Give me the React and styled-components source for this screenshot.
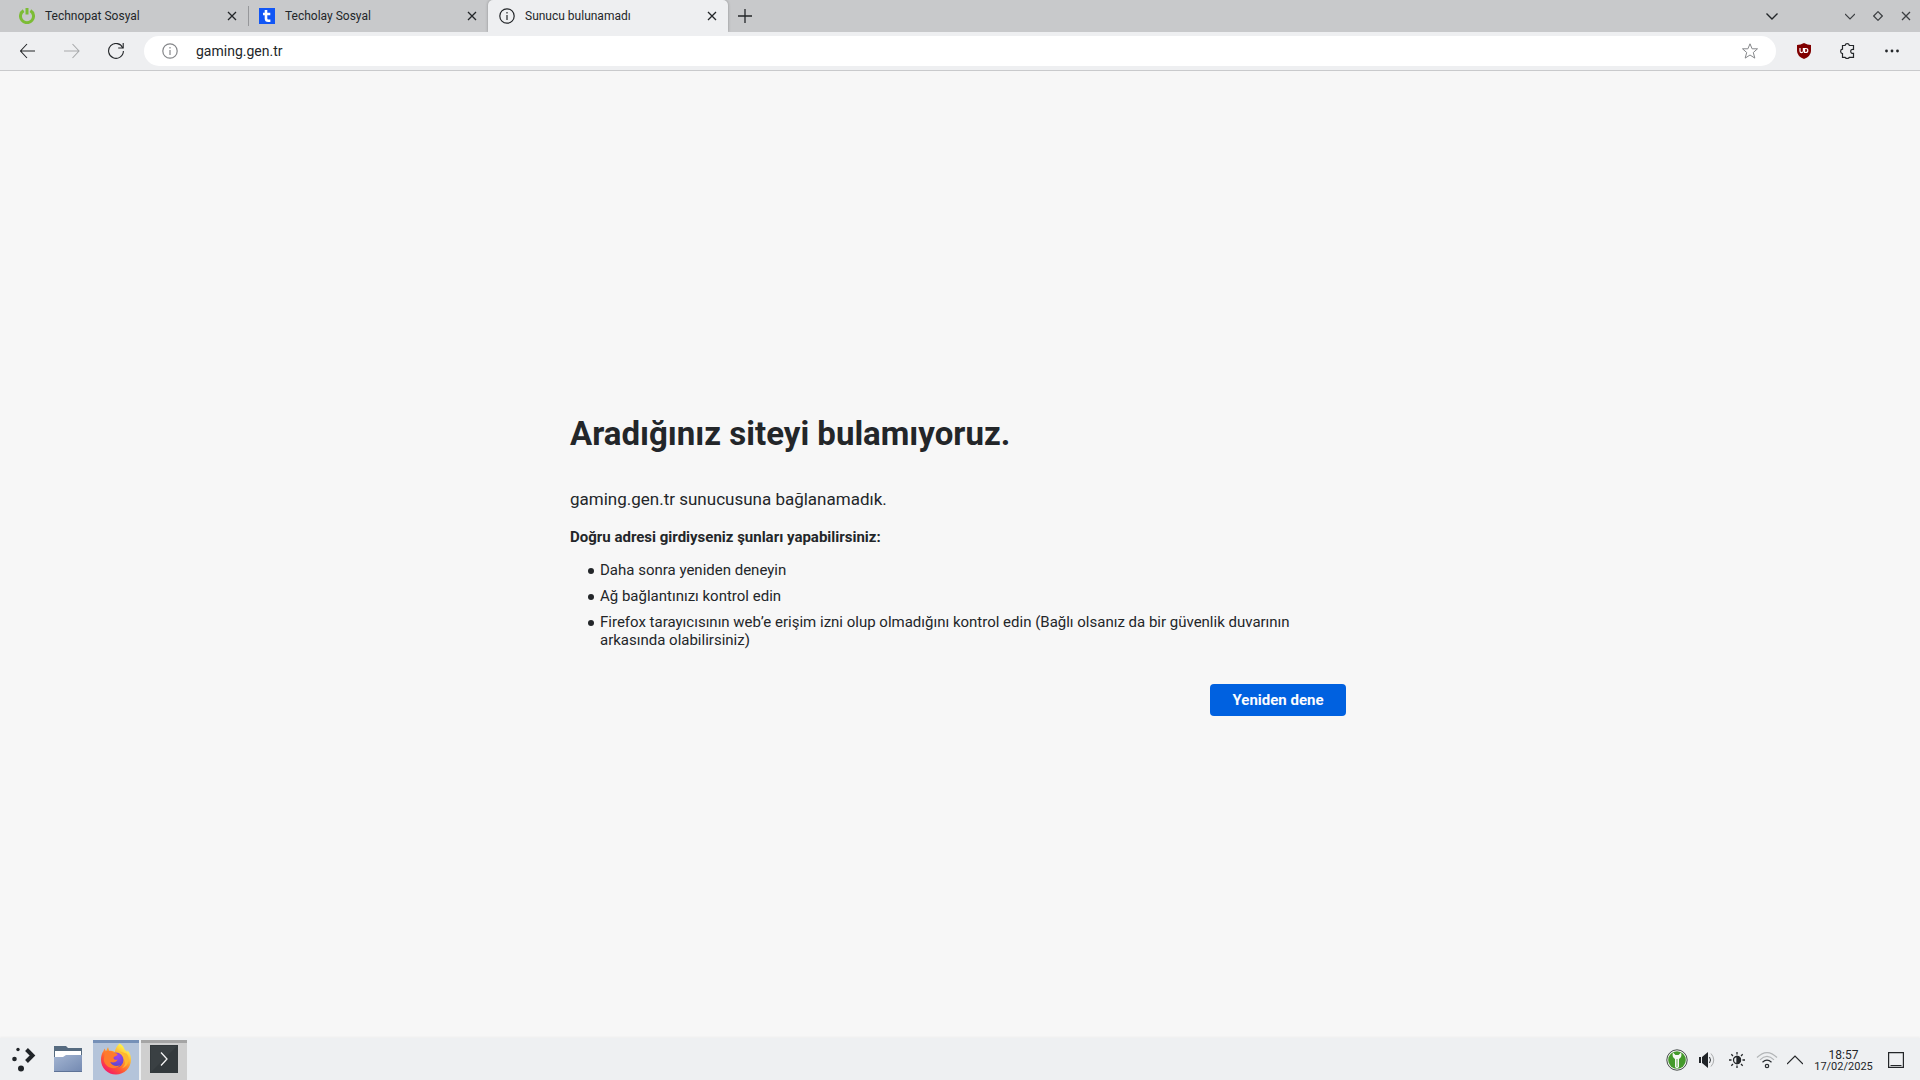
import React, { useState } from 'react';
import styled, { createGlobalStyle } from 'styled-components';

const tabs = [
  { title: 'Technopat Sosyal', icon: 'power' },
  { title: 'Techolay Sosyal', icon: 'techolay', separator: true },
  { title: 'Sunucu bulunamadı', icon: 'info', active: true },
];

const suggestions = [
  'Daha sonra yeniden deneyin',
  'Ağ bağlantınızı kontrol edin',
  'Firefox tarayıcısının web’e erişim izni olup olmadığını kontrol edin (Bağlı olsanız da bir güvenlik duvarının arkasında olabilirsiniz)',
];

const Line = ({ size = 16, width = 1, children, ...rest }) => (
  <svg
    width={size}
    height={size}
    viewBox={`0 0 ${size} ${size}`}
    fill="none"
    stroke="currentColor"
    strokeWidth={width}
    aria-hidden="true"
    {...rest}
  >
    {children}
  </svg>
);

const InfoIcon = () => (
  <Line width={1.2}>
    <circle cx="8" cy="8" r="7.2" />
    <path d="M8 7v5" />
    <path d="M8 4v1.5" />
  </Line>
);

const PowerIcon = () => (
  <Line width={3} stroke="#7cbc35">
    <path d="M4.6 2.6A6.5 6.5 0 1 0 11.4 2.6" />
    <path d="M8 0v6.5" />
  </Line>
);

const TecholayIcon = () => (
  <svg width="16" height="16" viewBox="0 0 16 16" aria-hidden="true">
    <path fill="#1156f5" d="M0 0h16v16H0z" />
    <path fill="none" stroke="#fff" strokeWidth="2.6" d="M7 2v8.5q0 2.2 2.2 2.2h2.2M4 6h7.3" />
  </svg>
);

const CloseIcon = () => (
  <Line size={10} width={1.3}>
    <path d="M1 1l8 8M9 1L1 9" />
  </Line>
);

const ChevronDown = () => (
  <Line size={12} width={1.4}>
    <path d="M0.5 3.5L6 9l5.5-5.5" />
  </Line>
);

const BackIcon = () => (
  <Line width={1.1}>
    <path d="M15 8H0M7 1L0.5 8 7 15" />
  </Line>
);

const ForwardIcon = () => (
  <Line width={1.1}>
    <path d="M0 8h15M8.500 1L15 8l-6.500 7" />
  </Line>
);

const ReloadIcon = () => (
  <Line width={1.1}>
    <path d="M14.8 5A7.400 7.400 0 1 0 15.400 8" />
    <path d="M15.200 0v5h-5" />
  </Line>
);

const StarIcon = () => (
  <Line>
    <path d="M8 .8l2.100 5h5.400l-4.200 3.700 1.500 5.600L8 12l-4.800 3.100 1.500-5.600L.5 5.800h5.400z" />
  </Line>
);

const ShieldIcon = () => (
  <svg width="16" height="16" viewBox="0 0 16 16" aria-hidden="true">
    <path fill="#800000" d="M8 0q3.500 2 7 2v6q0 5-7 8-7-3-7-8V2q3.500 0 7-2z" />
    <path fill="none" stroke="#fff" strokeWidth="1.2" d="M4 5v3q0 1.600 1.600 1.600T7.400 8V5M8.600 5.500v4h1.200q2 0 2-2t-2-2z" />
  </svg>
);

const PuzzleIcon = () => (
  <Line width={1.2}>
    <path d="M2.500 2.500H5Q5.500.7 7.200.7t2.200 1.800h4.100v4q-2.800-.4-2.800 1.800t2.800 2v4H9.400q-.5 1.200-2.200 1.200T5 14.300H2.500v-3.700Q.6 10.300.6 8.300t1.900-2.100z" />
  </Line>
);

const MoreIcon = () => (
  <svg width="16" height="16" viewBox="0 0 16 16" fill="currentColor" aria-hidden="true">
    <circle cx="2.5" cy="8" r="1.4" />
    <circle cx="8" cy="8" r="1.4" />
    <circle cx="13.5" cy="8" r="1.4" />
  </svg>
);

const LauncherIcon = () => (
  <svg width="28" height="26" viewBox="-3 0 28 26" fill="#202428" aria-hidden="true">
    <circle cx="7" cy="3.500" r="1.700" />
    <circle cx="3.500" cy="13" r="2.300" />
    <circle cx="10" cy="22.500" r="3" />
    <path fill="none" stroke="#202428" strokeWidth="4" d="M15.500 3.500l6 6-6 6" />
  </svg>
);

const FolderIcon = () => (
  <svg width="30" height="28" viewBox="0 0 30 28" aria-hidden="true">
    <defs>
      <linearGradient id="folder" x1="0" y1="0" x2="1" y2="1">
        <stop offset="0" stopColor="#a3b5d2" />
        <stop offset="1" stopColor="#7389b1" />
      </linearGradient>
    </defs>
    <path fill="#566b80" d="M1 1h12l2 2h14v14H1z" />
    <path fill="#fff" d="M2 6h26v10H2z" />
    <path fill="url(#folder)" d="M1 12h9l3-2h16v17H1z" />
    <path fill="#5e7397" d="M1 26h28v1H1z" />
  </svg>
);

const FirefoxIcon = () => (
  <svg width="32" height="32" viewBox="0 0 32 32" aria-hidden="true">
    <defs>
      <linearGradient id="fire" x1="0.85" y1="0.05" x2="0.2" y2="0.95">
        <stop offset="0.1" stopColor="#fff04a" />
        <stop offset="0.4" stopColor="#ffa22d" />
        <stop offset="0.7" stopColor="#ff5634" />
        <stop offset="1" stopColor="#f5156c" />
      </linearGradient>
      <radialGradient id="globe" cx="0.6" cy="0.25" r="0.8">
        <stop offset="0" stopColor="#a044ef" />
        <stop offset="1" stopColor="#5048c8" />
      </radialGradient>
    </defs>
    <path
      fill="url(#fire)"
      d="M19.5.5c3 1.5 4.5 4 5.2 6.2 1.3.8 2.2 1.8 2.6 2.6l.2-2c2.3 2.5 3.5 6 3.5 9.200C31 25 24.300 31.500 16 31.500S1 25 1 16.700c0-3.300.8-6.400 2.500-8.600L4.500 5.500 6 8.200 8 4l1.300 4c2-.4 4 0 5.500 1C15.500 5.500 17 2.500 19.500.5z"
    />
    <circle cx="16" cy="17" r="7.5" fill="url(#globe)" />
    <path fill="#ff7b2c" d="M5 9c3-2 7-1.300 9 .8 1.500.2 3 .8 3.700 1.700-.7 1.800-3.700 1.700-4.200 3.300 0 1.800 2 2.600 4.200 1.700-1 2.500-4.200 3.700-7.500 2.500 2 4 6.500 5 10 3-5 6-15 3-16.500-5z" />
    <path fill="#ffb72f" d="M17.500 8.500c4.500.5 7 4 6.500 8 2.500 3 .5 7-2.500 9 8-2.500 9-11 5-15-3-1-6-2.500-9-2z" />
  </svg>
);

const TerminalIcon = () => (
  <svg width="28" height="28" viewBox="0 0 28 28" aria-hidden="true">
    <path fill="#33393c" d="M0 0h28v28H0z" />
    <path fill="#454b4e" d="M1 1h26L1 27z" opacity="0.4" />
    <path fill="none" stroke="#f4f4f4" strokeWidth="1.3" d="M11 7.500l6 6.500-6 6.500" />
  </svg>
);

const KeyIcon = () => (
  <svg width="22" height="22" viewBox="0 0 22 22" aria-hidden="true">
    <circle cx="11" cy="11" r="10.2" fill="#f3f5f2" stroke="#444b48" />
    <circle cx="11" cy="11" r="8.8" fill="#449a2b" />
    <path fill="#f6f8f4" d="M7 3.500L9.500 6h3L15 3.500q1.500 4-2 6.500V18l-2 1.500L9 18v-8Q5.500 7.500 7 3.500z" />
    <path stroke="#60a74e" d="M11 10v8" />
  </svg>
);

const VolumeIcon = () => (
  <svg width="18" height="18" viewBox="0 0 18 18" aria-hidden="true">
    <path fill="#202428" d="M1 6h2v6H1zM4 6l6-5v16l-6-5z" />
    <path fill="none" stroke="#34383b" d="M11.500 6q2 3 0 6" />
    <path fill="none" stroke="#aaacad" d="M13 2.500q5.500 6.500 0 13" />
  </svg>
);

const BrightnessIcon = () => (
  <Line width={1.3}>
    <circle cx="8" cy="8" r="3.5" />
    <path fill="currentColor" d="M8 4.500a3.500 3.500 0 0 1 0 7z" />
    <path d="M8 0v2.500M8 13.500V16M0 8h2.500M13.500 8H16M2.300 2.300L4 4M12 12l1.700 1.700M2.300 13.700L4 12M12 4l1.700-1.700" />
  </Line>
);

const WifiIcon = () => (
  <svg width="22" height="18" viewBox="0 0 22 18" fill="none" strokeWidth="1.2" aria-hidden="true">
    <path stroke="#b3b6b8" d="M1 6.500q10-10 20 0M4 8.800q7-7 14 0" />
    <path stroke="#2a2e32" d="M6.500 11.200q4.500-4 9 0" />
    <circle cx="11" cy="15" r="1.7" stroke="#2a2e32" />
  </svg>
);

const favicons = {
  power: PowerIcon,
  techolay: TecholayIcon,
  info: InfoIcon,
};

const BrowserTab = ({ tab }) => {
  const Favicon = favicons[tab.icon];
  return (
    <Tab $active={tab.active} $separator={tab.separator}>
      <TabLabel role="tab" aria-selected={!!tab.active}>
        <Favicon />
        {tab.title}
      </TabLabel>
      <TabClose aria-label={`${tab.title} sekmesini kapat`}>
        <CloseIcon />
      </TabClose>
    </Tab>
  );
};

const App = () => {
  const [url, setUrl] = useState('gaming.gen.tr');

  return (
    <Desktop>
      <GlobalStyle />
      <TabBar>
        <TabList role="tablist">
          {tabs.map((tab) => (
            <BrowserTab key={tab.title} tab={tab} />
          ))}
        </TabList>
        <TitleButton $width={34} aria-label="Yeni sekme">
          <Line size={14} width={1.3}>
            <path d="M7 0v14M0 7h14" />
          </Line>
        </TitleButton>
        <Spacer />
        <TitleButton $width={28} aria-label="Tüm sekmeleri listele">
          <ChevronDown />
        </TitleButton>
        <WindowControls>
          <TitleButton $width={28} aria-label="Küçült">
            <Line size={10} width={1.2}>
              <path d="M0 3l5 5 5-5" />
            </Line>
          </TitleButton>
          <TitleButton $width={28} aria-label="Geri yükle">
            <Line size={10} width={1.2}>
              <path d="M5 .7L9.300 5 5 9.300.7 5z" />
            </Line>
          </TitleButton>
          <TitleButton $width={28} aria-label="Kapat">
            <CloseIcon />
          </TitleButton>
        </WindowControls>
      </TabBar>

      <Toolbar>
        <ToolButton aria-label="Geri">
          <BackIcon />
        </ToolButton>
        <ToolButton aria-label="İleri" disabled>
          <ForwardIcon />
        </ToolButton>
        <ToolButton aria-label="Yenile">
          <ReloadIcon />
        </ToolButton>
        <UrlBar>
          <UrlButton aria-label="Site bilgileri">
            <InfoIcon />
          </UrlButton>
          <UrlInput
            aria-label="Adres"
            value={url}
            onChange={(e) => setUrl(e.target.value)}
          />
          <UrlButton aria-label="Yer imlerine ekle">
            <StarIcon />
          </UrlButton>
        </UrlBar>
        <ToolButton aria-label="uBlock Origin">
          <ShieldIcon />
        </ToolButton>
        <ToolButton aria-label="Uzantılar">
          <PuzzleIcon />
        </ToolButton>
        <ToolButton aria-label="Menü">
          <MoreIcon />
        </ToolButton>
      </Toolbar>

      <Page>
        <ErrorBox>
          <Title>Aradığınız siteyi bulamıyoruz.</Title>
          <ShortDesc>gaming.gen.tr sunucusuna bağlanamadık.</ShortDesc>
          <Hint>Doğru adresi girdiyseniz şunları yapabilirsiniz:</Hint>
          <HintList>
            {suggestions.map((text) => (
              <HintItem key={text}>{text}</HintItem>
            ))}
          </HintList>
          <RetryButton>Yeniden dene</RetryButton>
        </ErrorBox>
      </Page>

      <Taskbar>
        <TaskButton aria-label="Uygulama başlatıcı" $width={43}>
          <LauncherIcon />
        </TaskButton>
        <TaskButton aria-label="Dosyalar">
          <FolderIcon />
        </TaskButton>
        <TaskButton aria-label="Firefox" $fill="#b4c4da" $edge="#7590b7">
          <FirefoxIcon />
        </TaskButton>
        <TaskButton aria-label="Konsole" $fill="#cfcfcf" $edge="#a5a5a5">
          <TerminalIcon />
        </TaskButton>
        <Spacer />
        <TrayButton aria-label="KeePassXC">
          <KeyIcon />
        </TrayButton>
        <TrayButton aria-label="Ses">
          <VolumeIcon />
        </TrayButton>
        <TrayButton aria-label="Parlaklık">
          <BrightnessIcon />
        </TrayButton>
        <TrayButton aria-label="Ağlar">
          <WifiIcon />
        </TrayButton>
        <TrayButton $width={26} aria-label="Gizli simgeleri göster">
          <Line width={1.2}>
            <path d="M0 12l8-8 8 8" />
          </Line>
        </TrayButton>
        <Clock>
          <Time>18:57</Time>
          <DateText>17/02/2025</DateText>
        </Clock>
        <TrayButton $width={34} aria-label="Masaüstünü göster">
          <Line width={1.2}>
            <path d="M.6.6h14.800v14.800H.6zM2.500 13.500h11" />
          </Line>
        </TrayButton>
      </Taskbar>
    </Desktop>
  );
};

const GlobalStyle = createGlobalStyle`
  * {
    box-sizing: border-box;
  }
  body {
    margin: 0;
    font-family: Roboto, "Noto Sans", sans-serif;
    color: #232629;
  }
  button, input {
    margin: 0;
    padding: 0;
    border: none;
    background: none;
    font: inherit;
    color: inherit;
  }
  svg {
    display: block;
    flex: none;
  }
`;

const Desktop = styled.div`
  display: flex;
  flex-direction: column;
  min-height: 100vh;
  background-color: #f7f7f7;
`;

const Spacer = styled.div`
  flex: 1;
`;

const TabBar = styled.header`
  display: flex;
  height: 32px;
  padding-left: 8px;
  background-color: #c8c9cb;
`;

const TabList = styled.div`
  display: flex;
`;

const Tab = styled.div`
  display: flex;
  align-items: center;
  width: 240px;
  padding: 0 10px 0 11px;
  border-radius: 5px 5px 0 0;
  background-color: ${({ $active }) => ($active ? '#eeeff1' : 'transparent')};
  background-image: ${({ $separator }) =>
    $separator ? 'linear-gradient(#96979a, #96979a)' : 'none'};
  background-size: 1px 20px;
  background-position: 0 6px;
  background-repeat: no-repeat;
  box-shadow: ${({ $active }) => ($active ? '0 0 3px rgba(0, 0, 0, 0.3)' : 'none')};
`;

const TabLabel = styled.button`
  display: flex;
  flex: 1;
  align-items: center;
  gap: 10px;
  font-size: 12px;
  line-height: 16px;
`;

const TabClose = styled.button`
  padding: 1px;
`;

const TitleButton = styled.button`
  display: flex;
  align-items: center;
  justify-content: center;
  width: ${({ $width }) => $width}px;
`;

const WindowControls = styled.div`
  display: flex;
  margin-left: 50px;
  color: #3c3f42;
`;

const Toolbar = styled.nav`
  position: relative;
  display: flex;
  align-items: center;
  height: 39px;
  padding: 0 6px;
  border-bottom: 1px solid #c9cacc;
  background-color: #eeeff1;
`;

const ToolButton = styled.button`
  display: flex;
  align-items: center;
  justify-content: center;
  width: 44px;
  height: 30px;

  &:disabled {
    color: #a7a9ab;
  }
`;

const UrlBar = styled.div`
  display: flex;
  flex: 1;
  align-items: center;
  height: 30px;
  margin: 0 6px;
  padding: 0 10px;
  border-radius: 15px;
  background-color: #fff;
`;

const UrlButton = styled.button`
  display: flex;
  align-items: center;
  justify-content: center;
  width: 32px;
  height: 30px;
  color: #85878a;
`;

const UrlInput = styled.input`
  flex: 1;
  min-width: 0;
  padding-left: 10px;
  font-size: 14px;
  line-height: 20px;
  outline: none;
`;

const Page = styled.main`
  display: flex;
  flex: 1;
  align-items: center;
  justify-content: center;
`;

const ErrorBox = styled.section`
  display: flex;
  flex-direction: column;
  width: 100%;
  max-width: 780px;
  font-size: 15px;
  line-height: 18px;
`;

const Title = styled.h1`
  margin: 24px 0 34px;
  font-size: 33px;
  font-weight: 700;
  line-height: 40px;
`;

const ShortDesc = styled.p`
  margin: 0 0 18px;
  font-size: 17px;
  line-height: 22px;
`;

const Hint = styled.h2`
  margin: 0 0 15px;
  font-size: 15px;
  font-weight: 700;
  line-height: 18px;
`;

const HintList = styled.ul`
  display: flex;
  flex-direction: column;
  gap: 8px;
  margin: 0;
  padding: 0 30px;
  list-style: none;
`;

const HintItem = styled.li`
  display: flex;

  &::before {
    content: '';
    flex: none;
    width: 6px;
    height: 6px;
    margin: 7px 6px 0 -12px;
    border-radius: 50%;
    background-color: currentColor;
  }
`;

const RetryButton = styled.button`
  align-self: flex-end;
  min-width: 136px;
  min-height: 32px;
  margin: 35px 4px 4px;
  padding: 0 20px;
  border-radius: 4px;
  background-color: #0061e0;
  color: #fbfbfe;
  font-weight: 700;
`;

const Taskbar = styled.footer`
  display: flex;
  align-items: stretch;
  height: 42px;
  padding: 2px 7px 0 0;
  background-color: #eef0f2;
  box-shadow: 0 -1px 2px rgba(0, 0, 0, 0.04);
`;

const TaskButton = styled.button`
  display: flex;
  align-items: center;
  justify-content: center;
  width: ${({ $width }) => $width || 46}px;
  margin-right: 2px;
  padding-bottom: 2px;
  background-color: ${({ $fill }) => $fill || 'transparent'};
  box-shadow: inset 0 3px ${({ $edge }) => $edge || 'transparent'};
`;

const TrayButton = styled.button`
  display: flex;
  align-items: center;
  justify-content: center;
  width: ${({ $width }) => $width || 30}px;
`;

const Clock = styled.div`
  display: flex;
  flex-direction: column;
  align-items: center;
  justify-content: center;
  width: 71px;
`;

const Time = styled.time`
  font-size: 12px;
  line-height: 12px;
`;

const DateText = styled.time`
  font-size: 11px;
  line-height: 11px;
`;

export default App;
